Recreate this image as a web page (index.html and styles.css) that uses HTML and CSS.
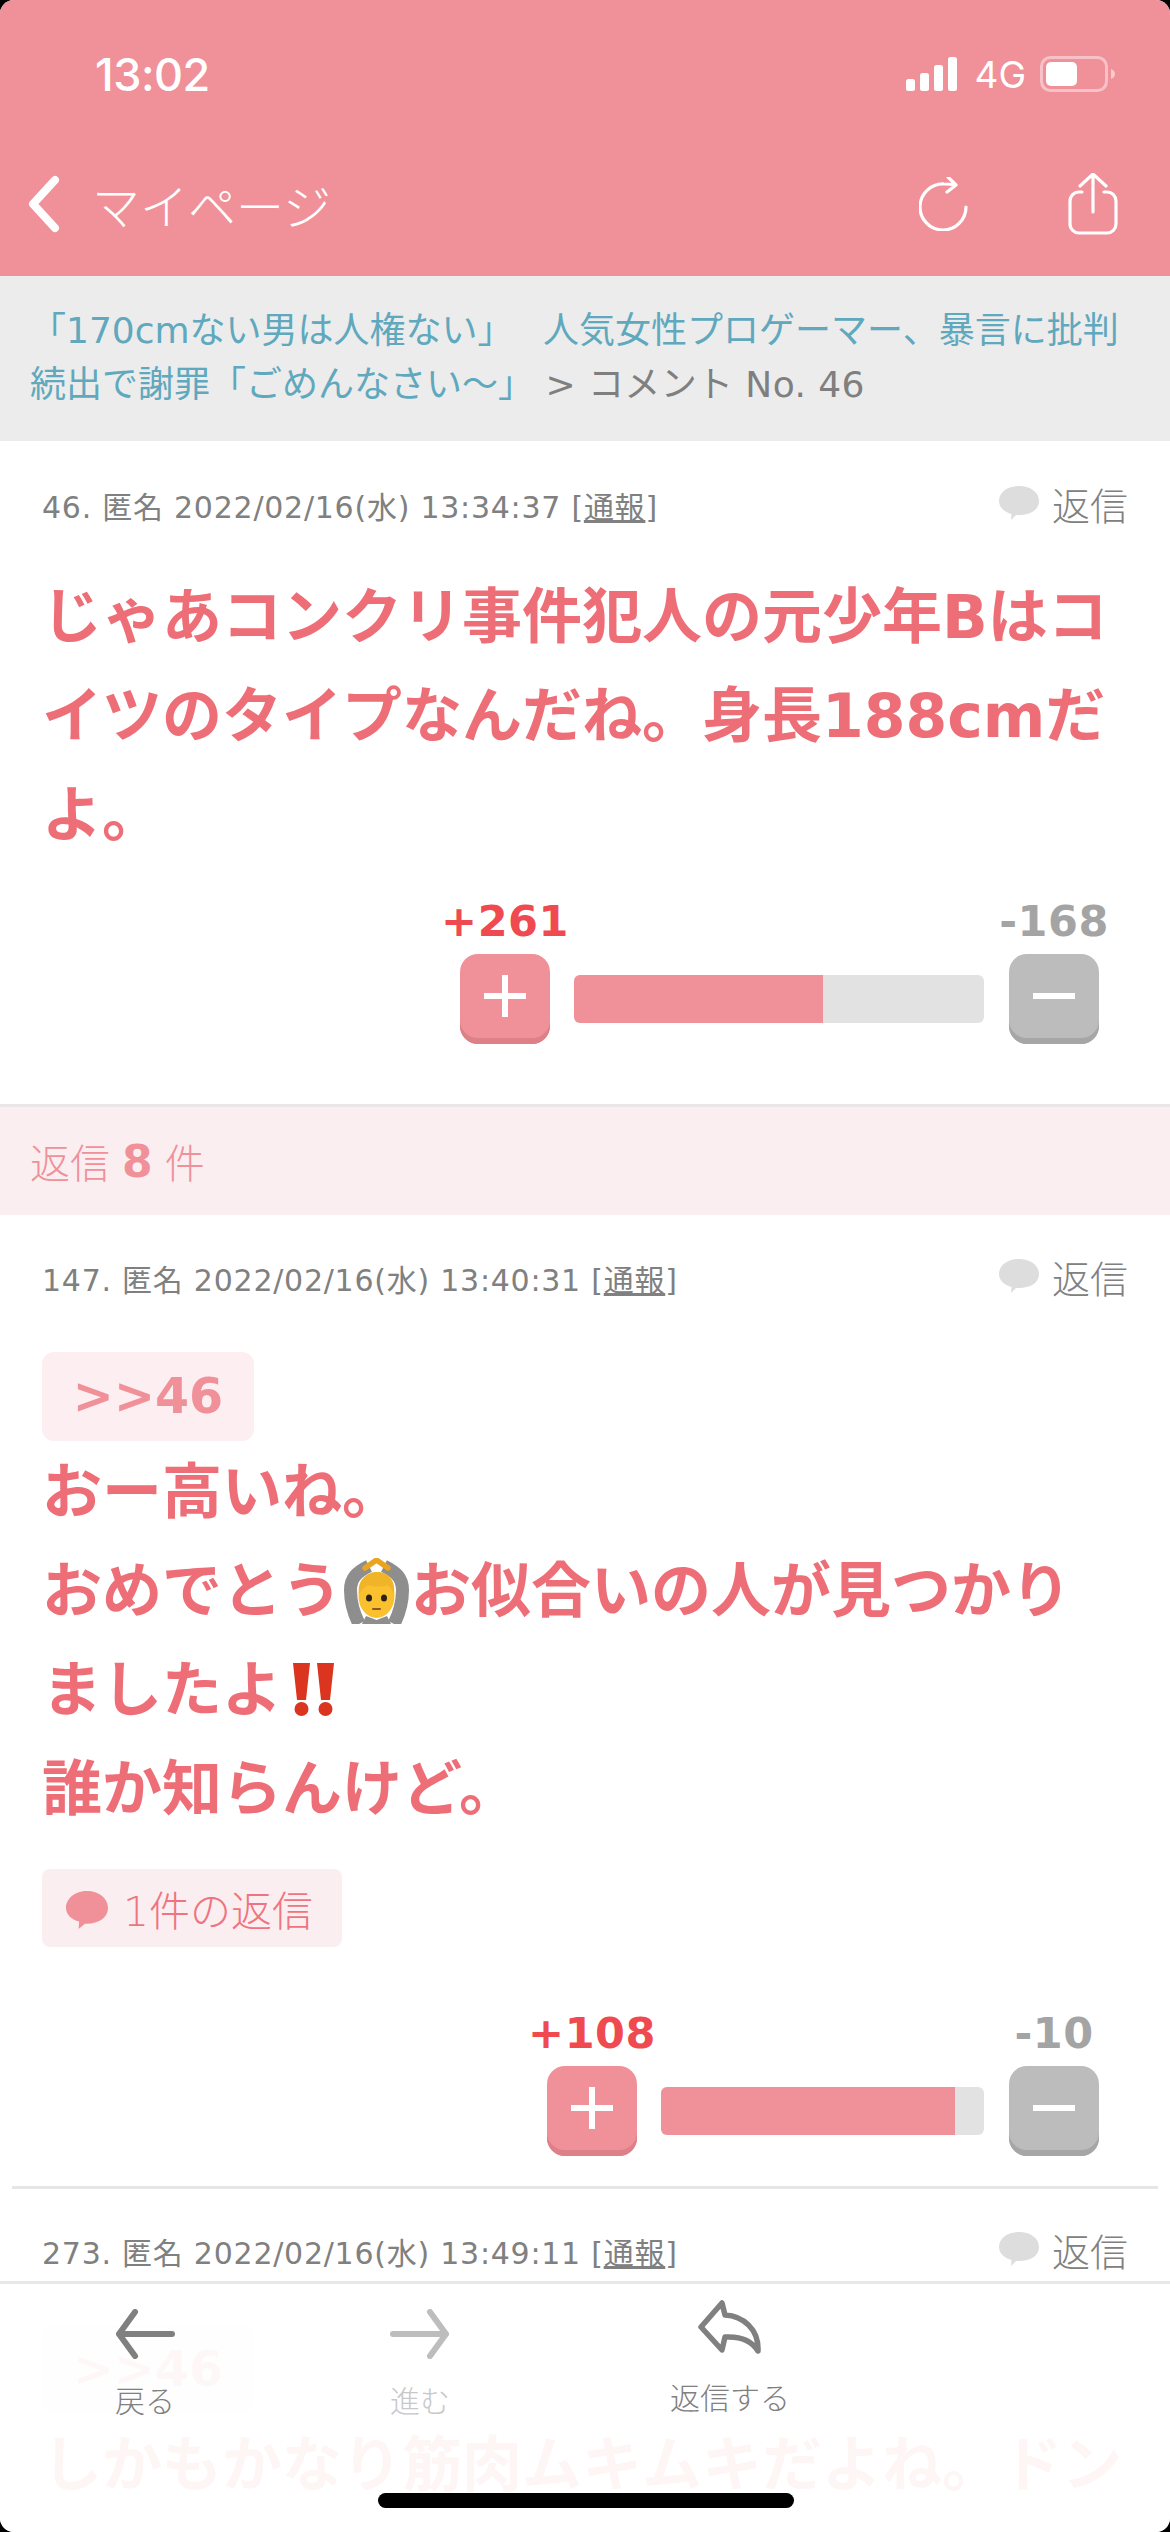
FILE: index.html
```html
<!DOCTYPE html>
<html lang="ja">
<head>
<meta charset="utf-8">
<title>コメント No. 46</title>
<link rel="stylesheet" href="styles.css">
</head>
<body>
<div class="app">
  <header class="header">
    <div class="status">
      <span class="time">13:02</span>
      <div class="status-icons">
        <svg class="signal" width="52" height="34" viewBox="0 0 52 34"><rect x="0" y="22" width="9" height="12" rx="2.5"/><rect x="14" y="16" width="9" height="18" rx="2.5"/><rect x="28" y="8" width="9" height="26" rx="2.5"/><rect x="42" y="0" width="9" height="34" rx="2.5"/></svg>
        <span class="net">4G</span>
        <svg class="battery" width="76" height="36" viewBox="0 0 76 36"><rect x="1.5" y="1.5" width="65" height="33" rx="9" fill="none" stroke="#fff" stroke-opacity=".45" stroke-width="3"/><rect x="6" y="6" width="31" height="24" rx="5" fill="#fff"/><path d="M71 13c3 1 4 3 4 5s-1 4-4 5z" fill="#fff" fill-opacity=".5"/></svg>
      </div>
    </div>
    <nav class="nav">
      <svg class="chevron" width="32" height="58" viewBox="0 0 32 58"><path d="M27 5 5 29l22 24" fill="none" stroke="#fff" stroke-width="8" stroke-linecap="round" stroke-linejoin="round"/></svg>
      <span class="nav-title">マイページ</span>
      <svg class="refresh" width="50" height="54" viewBox="0 0 50 54"><path d="M47 30A23 23 0 1 1 25 7c4 0 8 0 11 1M29 0l8 8-9 7" fill="none" stroke="#fff" stroke-width="3.2" stroke-linecap="round" stroke-linejoin="round"/></svg>
      <svg class="share" width="50" height="62" viewBox="0 0 50 62"><path d="M14 19H11a9 9 0 0 0-9 9v23a9 9 0 0 0 9 9h28a9 9 0 0 0 9-9V28a9 9 0 0 0-9-9h-3M25 39V2M12 13 25 1l13 12" fill="none" stroke="#fff" stroke-width="3.2" stroke-linecap="round" stroke-linejoin="round"/></svg>
    </nav>
  </header>

  <div class="crumb"><span class="crumb-link">「170cmない男は人権ない」　 人気女性プロゲーマー、暴言に批判続出で謝罪「ごめんなさい〜」</span> <span class="crumb-rest">&gt; コメント No. 46</span></div>

  <article class="comment comment-main">
    <div class="meta">
      <span class="meta-info">46. 匿名 2022/02/16(水) 13:34:37 [<u>通報</u>]</span>
      <span class="reply"><svg class="bubble" width="40" height="34" viewBox="0 0 40 34"><path d="M20 0c11 0 20 6 20 15S31 29 20 29h-3l-5 5 .5-6C5 26 0 21 0 15 0 6 9 0 20 0z" fill="#ddd"/></svg>返信</span>
    </div>
    <p class="body">じゃあコンクリ事件犯人の元少年Bはコイツのタイプなんだね。身長188cmだよ。</p>
    <div class="vote">
      <div class="vote-col"><span class="count plus">+261</span><span class="btn btn-plus"><svg width="42" height="42" viewBox="0 0 42 42"><path d="M18 0h6v18h18v6H24v18h-6V24H0v-6h18z" fill="#fff"/></svg></span></div>
      <div class="bar" style="width:410px"><div class="fill" style="width:60.8%"></div></div>
      <div class="vote-col"><span class="count minus">-168</span><span class="btn btn-minus"><svg width="42" height="6" viewBox="0 0 42 6"><rect width="42" height="6" fill="#fff"/></svg></span></div>
    </div>
  </article>

  <div class="reply-count">返信 <b>8</b> 件</div>

  <article class="comment comment-ruled">
    <div class="meta">
      <span class="meta-info">147. 匿名 2022/02/16(水) 13:40:31 [<u>通報</u>]</span>
      <span class="reply"><svg class="bubble" width="40" height="34" viewBox="0 0 40 34"><path d="M20 0c11 0 20 6 20 15S31 29 20 29h-3l-5 5 .5-6C5 26 0 21 0 15 0 6 9 0 20 0z" fill="#ddd"/></svg>返信</span>
    </div>
    <div class="anchor">&gt;&gt;46</div>
    <p class="body body-after-anchor">おー高いね。<br>おめでとう<svg class="emoji" width="69" height="66" viewBox="-2 0 69 66" role="img" aria-label="🙆"><path d="M15 66C9 54 6.500 44 6.500 32 6.500 20 13 14 25 8" fill="none" stroke="#8e8e8e" stroke-width="13"/><path d="M50 66C56 54 58.500 44 58.500 32 58.500 20 52 14 40 8" fill="none" stroke="#8e8e8e" stroke-width="13"/><path d="M18 66l4-8 10.500 4 10.500-4 4 8z" fill="#8e8e8e"/><path d="M21 10 32.500 2 44 10" fill="none" stroke="#e9a520" stroke-width="5.500" stroke-linejoin="round" stroke-linecap="round"/><ellipse cx="32.500" cy="38" rx="18" ry="22" fill="#fbc02d"/><path d="M15 36C13 22 23 14 33 14c11 0 19 8 17 22-2-4-4-7-6-9-6 2-14 2-20 0-3 2-7 5-9 9z" fill="#f0b429"/><ellipse cx="25" cy="40" rx="3" ry="3.500" fill="#2b2318"/><ellipse cx="40" cy="40" rx="3" ry="3.500" fill="#2b2318"/><path d="M29 51h7" stroke="#8f5524" stroke-width="2" stroke-linecap="round"/></svg>お似合いの人が見つかり<br>ましたよ<svg class="emoji-bang" width="72" height="54" viewBox="0 0 72 54" role="img" aria-label="‼"><path d="M11 0h17l-4 37h-9zM35 0h17l-4 37h-9z" fill="#db3520"/><circle cx="19.500" cy="46" r="7" fill="#db3520"/><circle cx="43.500" cy="46" r="7" fill="#db3520"/></svg><br>誰か知らんけど。</p>
    <div class="reply-link"><svg class="bubble-pink" width="42" height="38" viewBox="0 0 40 36"><path d="M20 0c11 0 20 7 20 16S31 31 20 31h-2l-6 5 .5-7C5 27 0 22 0 16 0 7 9 0 20 0z" fill="#f09199"/></svg>1件の返信</div>
    <div class="vote">
      <div class="vote-col"><span class="count plus">+108</span><span class="btn btn-plus"><svg width="42" height="42" viewBox="0 0 42 42"><path d="M18 0h6v18h18v6H24v18h-6V24H0v-6h18z" fill="#fff"/></svg></span></div>
      <div class="bar" style="width:323px"><div class="fill" style="width:91%"></div></div>
      <div class="vote-col"><span class="count minus">-10</span><span class="btn btn-minus"><svg width="42" height="6" viewBox="0 0 42 6"><rect width="42" height="6" fill="#fff"/></svg></span></div>
    </div>
  </article>

  <article class="comment comment-last">
    <div class="meta">
      <span class="meta-info">273. 匿名 2022/02/16(水) 13:49:11 [<u>通報</u>]</span>
      <span class="reply"><svg class="bubble" width="40" height="34" viewBox="0 0 40 34"><path d="M20 0c11 0 20 6 20 15S31 29 20 29h-3l-5 5 .5-6C5 26 0 21 0 15 0 6 9 0 20 0z" fill="#ddd"/></svg>返信</span>
    </div>
    <div class="anchor">&gt;&gt;46</div>
    <p class="body body-after-anchor">しかもかなり筋肉ムキムキだよね。ドン</p>
  </article>

  <footer class="footer">
    <div class="tool tool-back">
      <svg width="60" height="50" viewBox="0 0 60 50"><path d="M57 25H4M20 3 4 25l16 22" fill="none" stroke="#808080" stroke-width="6" stroke-linecap="round" stroke-linejoin="round"/></svg>
      <span>戻る</span>
    </div>
    <div class="tool tool-forward">
      <svg width="60" height="50" viewBox="0 0 60 50"><path d="M3 25h53M40 3l16 22-16 22" fill="none" stroke="#bdbdbd" stroke-width="6" stroke-linecap="round" stroke-linejoin="round"/></svg>
      <span>進む</span>
    </div>
    <div class="tool tool-reply">
      <svg width="64" height="54" viewBox="0 0 64 54"><path d="M3 27 24 3l3 12c18 1 34 14 33 36-6-10-16-15-33-14l-3 13z" fill="none" stroke="#808080" stroke-width="5.500" stroke-linecap="round" stroke-linejoin="round"/></svg>
      <span>返信する</span>
    </div>
    <div class="home"></div>
  </footer>
</div>
</body>
</html>
```

FILE: styles.css
```css
* { box-sizing: border-box; }
html, body { margin: 0; padding: 0; background: #000; }
body {
  font-family: "DejaVu Sans", "Noto Sans CJK JP", sans-serif;
  color: #808080;
}
.app {
  position: relative;
  width: 1170px;
  height: 2532px;
  overflow: hidden;
  background: #fff;
  border-radius: 14px;
}
.header { height: 276px; background: #f09199; color: #fff; }
.status {
  height: 148px;
  padding: 0 54px 0 95px;
  display: flex;
  align-items: center;
  justify-content: space-between;
}
.time { font-family: Inter, sans-serif; font-weight: 500; font-size: 45px; letter-spacing: -.5px; }
.status-icons { display: flex; align-items: center; }
.signal { fill: #fff; margin-right: 16px; }
.net { font-family: Inter, sans-serif; font-size: 37px; margin-right: 14px; }
.nav {
  height: 128px;
  padding: 0 52px 16px 28px;
  display: flex;
  align-items: center;
}
.nav-title { margin-left: 32px; font-size: 48px; font-weight: 300; font-family: "Noto Sans CJK JP", sans-serif; }
.refresh { margin-left: auto; margin-right: 99px; }

.crumb {
  height: 165px;
  padding: 28px 30px 0;
  background: #ececec;
  font-size: 36px;
  line-height: 54px;
}
.crumb-link { color: #5fa8bd; }
.crumb-rest { color: #7f7f7f; letter-spacing: .4px; }

.comment { padding: 44px 42px 0 42px; }
.comment-main { height: 663px; }
.comment-ruled {
  margin: 0 12px;
  padding: 43px 30px 30px 30px;
  border-bottom: 3px solid #e6e6e6;
}
.comment-last { padding-top: 42px; }
.meta { height: 40px; display: flex; align-items: center; justify-content: space-between; }
.meta-info { font-size: 30px; letter-spacing: .75px; white-space: nowrap; }
.reply { display: flex; align-items: center; margin-top: -4px; font-size: 38px; font-weight: 300; font-family: "Noto Sans CJK JP", sans-serif; }
.bubble { margin-right: 13px; }
.body {
  margin: 43px 0 0;
  font-size: 60px;
  line-height: 99px;
  font-weight: 700;
  color: #ee6e78;
}
.body-after-anchor { margin-top: 2px; }
.emoji { vertical-align: -12px; }
.emoji-bang { vertical-align: -6px; }

.vote { margin-top: 31px; display: flex; justify-content: flex-end; align-items: flex-end; margin-right: 29px; }
.vote-col { width: 90px; display: flex; flex-direction: column; align-items: center; }
.count { height: 50px; font-size: 43px; letter-spacing: .5px; line-height: 50px; font-weight: 700; white-space: nowrap; margin-bottom: 8px; display: flex; justify-content: center; width: 90px; }
.plus { color: #ef4a50; }
.minus { color: #a4a4a4; }
.btn {
  width: 90px;
  height: 90px;
  padding-bottom: 6px;
  border-radius: 18px;
  display: flex;
  align-items: center;
  justify-content: center;
}
.btn-plus { background: #f09199; box-shadow: inset 0 -6px 0 #dd8088; }
.btn-minus { background: #bcbcbc; box-shadow: inset 0 -6px 0 #a6a6a6; }
.bar {
  height: 48px;
  margin: 0 25px 21px 24px;
  background: #e2e2e2;
  border-radius: 6px;
  overflow: hidden;
}
.fill { height: 100%; background: #f09199; }

.reply-count {
  height: 111px;
  border-top: 3px solid #e8e6e8;
  padding-left: 30px;
  display: flex;
  align-items: center;
  gap: 12px;
  background: #faeef1;
  color: #f09199;
  font-size: 40px;
  font-weight: 300;
}
.reply-count b { font-weight: 700; font-size: 44px; }

.anchor {
  width: 212px;
  height: 89px;
  margin-top: 54px;
  border-radius: 12px;
  background: #fceef1;
  color: #f09199;
  font-size: 49px;
  font-weight: 700;
  display: flex;
  align-items: center;
  justify-content: center;
}
.reply-link {
  width: 300px;
  height: 78px;
  margin: 30px 0 61px;
  border-radius: 8px;
  background: #fbeef1;
  color: #ee7580;
  font-size: 41px;
  font-weight: 300;
  display: flex;
  align-items: center;
  padding-left: 24px;
}
.bubble-pink { margin-right: 15px; margin-top: 4px; }

.footer {
  position: absolute;
  left: 0;
  right: 0;
  bottom: 0;
  height: 251px;
  border-top: 3px solid #e8e8e8;
  background: rgba(255, 255, 255, .93);
  display: grid;
  grid-template-columns: 290px 260px 360px;
  align-items: start;
}
.tool {
  display: flex;
  flex-direction: column;
  align-items: center;
  font-size: 30px;
  font-weight: 300;
  font-family: "Noto Sans CJK JP", sans-serif;
}
.tool span { line-height: 40px; }
.tool-back, .tool-forward { padding-top: 25px; }
.tool-back span, .tool-forward span { margin-top: 20px; }
.tool-forward { color: #c8c8c8; }
.tool-reply { padding-top: 16px; }
.tool-reply span { margin-top: 22px; }
.home {
  position: absolute;
  left: 378px;
  bottom: 24px;
  width: 416px;
  height: 15px;
  border-radius: 8px;
  background: #000;
}
```
